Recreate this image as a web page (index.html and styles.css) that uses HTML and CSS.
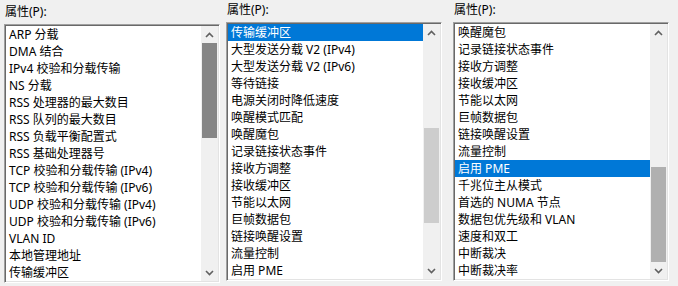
FILE: index.html
```html
<html><head>
<meta charset="UTF-8">
<meta name="viewport" content="width=device-width, initial-scale=1.0">
<title>属性</title>
<link rel="stylesheet" href="styles.css">
</head>
<body>
  <div class="row">

    <div class="panel first">
      <div class="label">属性(P):</div>
      <div class="listbox">
        <ul class="items">
          <li>ARP 分载</li>
          <li>DMA 结合</li>
          <li>IPv4 校验和分载传输</li>
          <li>NS 分载</li>
          <li>RSS 处理器的最大数目</li>
          <li>RSS 队列的最大数目</li>
          <li>RSS 负载平衡配置式</li>
          <li>RSS 基础处理器号</li>
          <li>TCP 校验和分载传输 (IPv4)</li>
          <li>TCP 校验和分载传输 (IPv6)</li>
          <li>UDP 校验和分载传输 (IPv4)</li>
          <li>UDP 校验和分载传输 (IPv6)</li>
          <li>VLAN ID</li>
          <li>本地管理地址</li>
          <li>传输缓冲区</li>
        </ul>
        <div class="scrollbar">
          <div class="arrow"><svg width="9" height="6" viewBox="0 0 9 6"><polyline points="1,5 4.5,1.5 8,5" /></svg></div>
          <div class="track"><div class="thumb pressed" style="margin-top: 0px"></div></div>
          <div class="arrow"><svg width="9" height="6" viewBox="0 0 9 6"><polyline points="1,1 4.5,4.5 8,1" /></svg></div>
        </div>
      </div>
    </div>

    <div class="panel">
      <div class="label">属性(P):</div>
      <div class="listbox">
        <ul class="items">
          <li class="selected">传输缓冲区</li>
          <li>大型发送分载 V2 (IPv4)</li>
          <li>大型发送分载 V2 (IPv6)</li>
          <li>等待链接</li>
          <li>电源关闭时降低速度</li>
          <li>唤醒模式匹配</li>
          <li>唤醒魔包</li>
          <li>记录链接状态事件</li>
          <li>接收方调整</li>
          <li>接收缓冲区</li>
          <li>节能以太网</li>
          <li>巨帧数据包</li>
          <li>链接唤醒设置</li>
          <li>流量控制</li>
          <li>启用 PME</li>
        </ul>
        <div class="scrollbar">
          <div class="arrow"><svg width="9" height="6" viewBox="0 0 9 6"><polyline points="1,5 4.5,1.5 8,5" /></svg></div>
          <div class="track"><div class="thumb" style="margin-top: 87px"></div></div>
          <div class="arrow"><svg width="9" height="6" viewBox="0 0 9 6"><polyline points="1,1 4.5,4.5 8,1" /></svg></div>
        </div>
      </div>
    </div>

    <div class="panel last">
      <div class="label">属性(P):</div>
      <div class="listbox">
        <ul class="items">
          <li>唤醒魔包</li>
          <li>记录链接状态事件</li>
          <li>接收方调整</li>
          <li>接收缓冲区</li>
          <li>节能以太网</li>
          <li>巨帧数据包</li>
          <li>链接唤醒设置</li>
          <li>流量控制</li>
          <li class="selected">启用 PME</li>
          <li>千兆位主从模式</li>
          <li>首选的 NUMA 节点</li>
          <li>数据包优先级和 VLAN</li>
          <li>速度和双工</li>
          <li>中断裁决</li>
          <li>中断裁决率</li>
        </ul>
        <div class="scrollbar">
          <div class="arrow"><svg width="9" height="6" viewBox="0 0 9 6"><polyline points="1,5 4.5,1.5 8,5" /></svg></div>
          <div class="track"><div class="thumb hover" style="margin-top: 126px"></div></div>
          <div class="arrow"><svg width="9" height="6" viewBox="0 0 9 6"><polyline points="1,1 4.5,4.5 8,1" /></svg></div>
        </div>
      </div>
    </div>

  </div>
</body>
</html>
```

FILE: styles.css
```css
body {
  font-family: "Noto Sans", "Noto Sans CJK SC", sans-serif;
  font-size: 12px;
  color: #000000;
  background-color: #f0f0f0;
  margin: 0;
  overflow: hidden;
}
.row {
  display: flex;
}
.panel {
  width: 222px;
  padding: 2px 0 0 4px;
  box-sizing: border-box;
}
.panel.first {
  padding-top: 4px;
}
.panel + .panel {
  width: 227px;
}
.panel.last {
  width: 229px;
}
.label {
  height: 16px;
  line-height: 16px;
  margin-bottom: 4px;
  padding-left: 1px;
}
.listbox {
  display: flex;
  width: 216px;
  height: 259px;
  box-sizing: border-box;
  background-color: #ffffff;
  border: 1px solid;
  border-color: #a0a0a0 #ffffff #ffffff #a0a0a0;
  box-shadow: inset 1px 1px 0 #696969, inset -1px -1px 0 #e3e3e3;
  padding: 1px;
}
.items {
  flex: 1;
  list-style: none;
  margin: 0;
  padding: 0;
  overflow: hidden;
}
.items li {
  height: 17px;
  line-height: 17px;
  padding-left: 3px;
  white-space: nowrap;
}
.items li.selected {
  background-color: #0078d7;
  color: #ffffff;
}
.scrollbar {
  width: 17px;
  display: flex;
  flex-direction: column;
  background-color: #f0f0f0;
}
.arrow {
  height: 17px;
  display: flex;
  align-items: center;
  justify-content: center;
}
.arrow svg polyline {
  fill: none;
  stroke: #606060;
  stroke-width: 1.6;
}
.track {
  flex: 1;
  padding: 0 1px;
}
.thumb {
  height: 95px;
  background-color: #cdcdcd;
}
.thumb.hover {
  background-color: #b0b0b0;
}
.thumb.pressed {
  background-color: #868686;
}
```
